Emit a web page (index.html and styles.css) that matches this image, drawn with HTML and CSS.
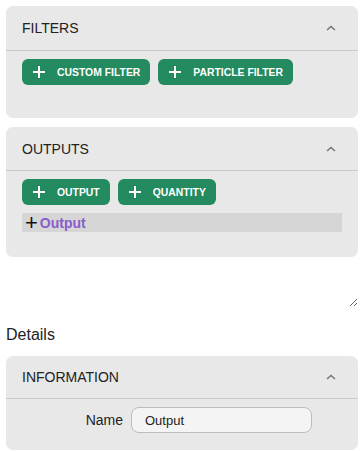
FILE: index.html
```html
<!DOCTYPE html>
<html lang="en">
<head>
<meta charset="UTF-8" />
<meta name="viewport" content="width=device-width, initial-scale=1.0"/>
<title>Editor</title>
<link rel="stylesheet" href="styles.css">
</head>
<body>
<section class="panel filters">
  <div class="panel-head">
    <span class="panel-title">FILTERS</span>
    <svg class="chevron" width="10" height="6" viewBox="0 0 10 6"><path d="M1 5 L5 1.5 L9 5" fill="none" stroke="#777" stroke-width="1.6"/></svg>
  </div>
  <div class="panel-body">
    <div class="btn-row">
      <button class="btn"><span class="plus"></span>CUSTOM FILTER</button>
      <button class="btn"><span class="plus"></span>PARTICLE FILTER</button>
    </div>
  </div>
</section>

<section class="panel outputs">
  <div class="panel-head">
    <span class="panel-title">OUTPUTS</span>
    <svg class="chevron" width="10" height="6" viewBox="0 0 10 6"><path d="M1 5 L5 1.5 L9 5" fill="none" stroke="#777" stroke-width="1.6"/></svg>
  </div>
  <div class="panel-body">
    <div class="btn-row">
      <button class="btn"><span class="plus"></span>OUTPUT</button>
      <button class="btn"><span class="plus"></span>QUANTITY</button>
    </div>
    <div class="tree-row"><span class="tree-plus">+</span><span class="tree-label">Output</span></div>
  </div>
</section>

<textarea class="notes"></textarea>

<h2 class="details">Details</h2>

<section class="panel info">
  <div class="panel-head">
    <span class="panel-title">INFORMATION</span>
    <svg class="chevron" width="10" height="6" viewBox="0 0 10 6"><path d="M1 5 L5 1.5 L9 5" fill="none" stroke="#777" stroke-width="1.6"/></svg>
  </div>
  <div class="panel-body">
    <div class="field">
      <label class="field-label" for="name">Name</label>
      <input class="field-input" id="name" type="text" value="Output">
    </div>
  </div>
</section>
</body>
</html>
```

FILE: styles.css
```css
body {
  font-family: "Liberation Sans", Arial, sans-serif;
  background: #fff;
  color: #222;
  margin: 0;
  padding: 6px;
}

.panel {
  background: #e8e8e8;
  border-radius: 7px;
  margin-bottom: 9px;
}

.panel-head {
  height: 44px;
  display: flex;
  align-items: center;
  justify-content: space-between;
  padding: 0 22px 0 16px;
  border-bottom: 1px solid #cacaca;
}

.panel-title {
  font-size: 14px;
  color: #222;
}

.panel-body {
  padding: 8px 16px 25px;
}

.outputs .panel-head {
  height: 43px;
}

.btn-row {
  display: flex;
  gap: 8px;
  margin-bottom: 8px;
}

.btn {
  display: flex;
  align-items: center;
  height: 26px;
  padding: 0 10px 0 11px;
  border: none;
  border-radius: 6px;
  background: #238b5f;
  color: #fff;
  font-family: "Liberation Sans", Arial, sans-serif;
  font-size: 10.4px;
  font-weight: bold;
  cursor: pointer;
}

.plus {
  position: relative;
  width: 12px;
  height: 12px;
  margin-right: 12px;
}

.plus::before,
.plus::after {
  content: "";
  position: absolute;
  background: #fff;
}

.plus::before {
  left: 5px;
  top: 0;
  width: 2px;
  height: 12px;
}

.plus::after {
  left: 0;
  top: 5px;
  width: 12px;
  height: 2px;
}

.tree-row {
  display: flex;
  align-items: center;
  height: 19px;
  background: #d6d6d6;
  padding-left: 3px;
}

.tree-plus {
  font-size: 22px;
  line-height: 19px;
  color: #111;
  margin-right: 2px;
}

.tree-label {
  font-size: 14px;
  font-weight: bold;
  color: #8a5ccc;
}

.notes {
  display: block;
  width: 352px;
  height: 41px;
  margin: 2px 0 0;
  border: none;
  background: transparent;
  outline: none;
  box-sizing: border-box;
}

.details {
  font-size: 16px;
  font-weight: normal;
  margin: 19px 0 12px;
}

.info .panel-head {
  height: 42px;
}

.info .panel-body {
  padding: 8px 16px 17px;
}

.field {
  display: flex;
  align-items: center;
  gap: 8px;
}

.field-label {
  width: 101px;
  text-align: right;
  font-size: 14px;
}

.field-input {
  width: 181px;
  height: 26px;
  box-sizing: border-box;
  border: 1px solid #bdbdbd;
  border-radius: 8px;
  background: #f4f4f4;
  padding: 0 13px;
  font-family: "Liberation Sans", Arial, sans-serif;
  font-size: 13px;
  color: #222;
}
```
